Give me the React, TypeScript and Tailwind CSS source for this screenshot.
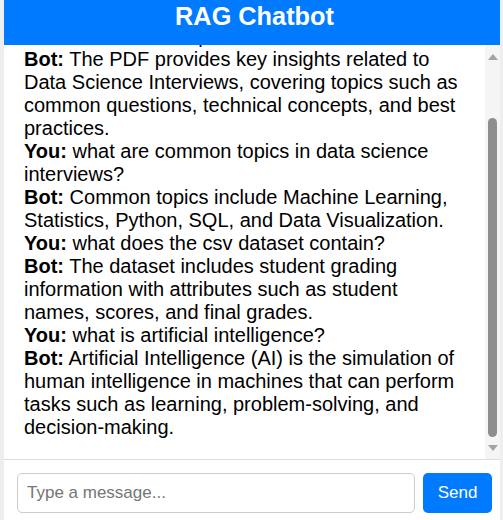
import { useEffect, useRef } from "react";

type Message = { sender: "You" | "Bot"; text: string };

const MESSAGES: Message[] = [
  { sender: "Bot", text: "Hi! I can answer questions about your uploaded PDF and CSV files." },
  { sender: "You", text: "what is in this pdf?" },
  {
    sender: "Bot",
    text: "The PDF provides key insights related to Data Science Interviews, covering topics such as common questions, technical concepts, and best practices.",
  },
  { sender: "You", text: "what are common topics in data science interviews?" },
  {
    sender: "Bot",
    text: "Common topics include Machine Learning, Statistics, Python, SQL, and Data Visualization.",
  },
  { sender: "You", text: "what does the csv dataset contain?" },
  {
    sender: "Bot",
    text: "The dataset includes student grading information with attributes such as student names, scores, and final grades.",
  },
  { sender: "You", text: "what is artificial intelligence?" },
  {
    sender: "Bot",
    text: "Artificial Intelligence (AI) is the simulation of human intelligence in machines that can perform tasks such as learning, problem-solving, and decision-making.",
  },
];

function Scrollbar() {
  return (
    <div className="flex w-[15px] shrink-0 flex-col items-center bg-[#f5f5f5]">
      <div className="flex h-[22px] items-center justify-center pt-[2px]">
        <svg width="10" height="6" viewBox="0 0 10 6">
          <path d="M5 0 L10 6 L0 6 Z" fill="#a3a3a3" />
        </svg>
      </div>
      <div className="mt-[51px] h-[319px] w-[9px] rounded-full bg-[#8e8e8e]" />
      <div className="flex flex-1 items-center justify-center pb-[1px]">
        <svg width="10" height="6" viewBox="0 0 10 6">
          <path d="M0 0 L10 0 L5 6 Z" fill="#a3a3a3" />
        </svg>
      </div>
    </div>
  );
}

export default function App() {
  const listRef = useRef<HTMLDivElement>(null);

  useEffect(() => {
    if (listRef.current) listRef.current.scrollTop = listRef.current.scrollHeight;
  }, []);

  return (
    <div
      className="min-h-[520px] bg-[#eeeeee] pl-1"
      style={{ fontFamily: '"Liberation Sans", Arial, sans-serif' }}
    >
      <div className="flex w-[496px] flex-col bg-white">
        <div className="h-[45px] bg-[#007bff] pt-[2px] pl-[5px] text-center text-[25.3px] leading-[29px] font-bold text-white">
          RAG Chatbot
        </div>
        <div className="flex h-[415px] border-b border-[#dddddd]">
          <div
            ref={listRef}
            className="flex-1 overflow-hidden px-5 pt-5 pb-5 text-[20px] leading-[23px] text-black"
          >
            {MESSAGES.map((m, i) => (
              <div key={i}>
                <strong>{m.sender}:</strong> {m.text}
              </div>
            ))}
          </div>
          <Scrollbar />
        </div>
        <div className="flex gap-2 pt-[13px] pr-2 pb-3 pl-[13px]">
          <input
            type="text"
            placeholder="Type a message..."
            className="h-10 flex-1 rounded-[5px] border border-[#cccccc] px-[9px] text-[17px] text-black outline-none placeholder:text-[#757575]"
          />
          <button
            type="button"
            className="h-10 w-[69px] rounded-[5px] bg-[#007bff] text-[17px] text-white"
          >
            Send
          </button>
        </div>
      </div>
    </div>
  );
}
